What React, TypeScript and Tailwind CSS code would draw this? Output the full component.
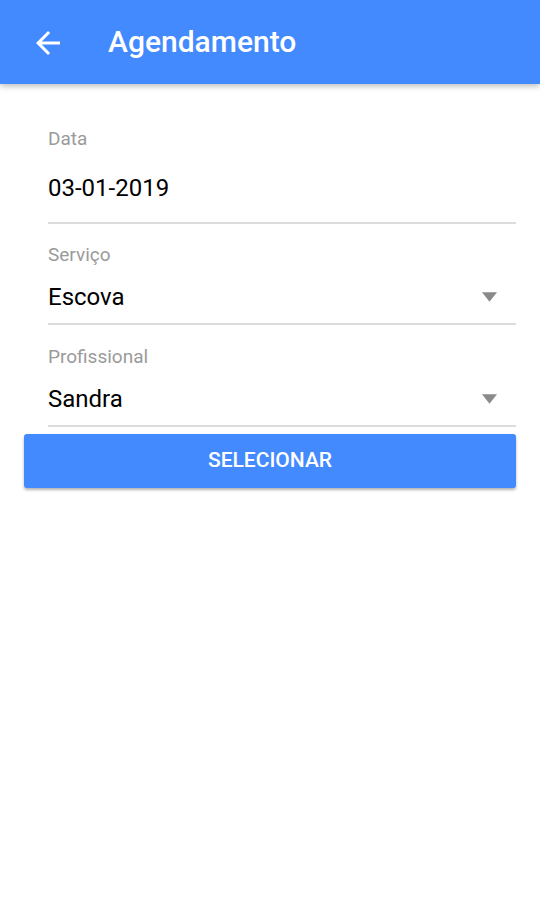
const font = { fontFamily: 'Roboto, "Noto Sans", sans-serif' };

function ArrowBack() {
  return (
    <svg viewBox="0 0 24 24" className="w-[36px] h-[36px]" fill="white">
      <path d="M20 11H7.83l5.59-5.59L12 4l-8 8 8 8 1.41-1.41L7.83 13H20v-2z" />
    </svg>
  );
}

function Caret() {
  return (
    <svg viewBox="0 0 16 10" className="w-[15px] h-[10px]" fill="#8a8a8a">
      <path d="M0 0h16L8 10z" />
    </svg>
  );
}

interface FieldProps {
  label: string;
  value: string;
  select?: boolean;
  labelGap: string;
  valueGap: string;
}

function Field({ label, value, select, labelGap, valueGap }: FieldProps) {
  return (
    <div className="flex flex-col">
      <div className="text-[19px] leading-[22px] text-[#9a9a9a]">{label}</div>
      <div className={`flex items-center justify-between ${labelGap}`}>
        <span className="text-[24px] leading-[28px] text-black">{value}</span>
        {select && (
          <span className="mr-[19px]">
            <Caret />
          </span>
        )}
      </div>
      <div className={`h-[2px] bg-[#dcdcdc] ${valueGap}`} />
    </div>
  );
}

export default function App() {
  return (
    <div className="w-[540px] h-[922px] bg-white" style={font}>
      <header className="relative z-10 h-[84px] bg-[#448aff] flex items-center shadow-[0_2px_6px_rgba(0,0,0,0.28)]">
        <div className="ml-[30px] mt-[2px]">
          <ArrowBack />
        </div>
        <h1 className="ml-[42px] text-white text-[30px] font-medium leading-none">Agendamento</h1>
      </header>

      <div className="pl-[48px] pr-[24px] pt-[44px] flex flex-col">
        <Field label="Data" value="03-01-2019" labelGap="mt-[24px]" valueGap="mt-[20px]" />
        <div className="mt-[20px]">
          <Field label="Serviço" value="Escova" select labelGap="mt-[17px]" valueGap="mt-[12px]" />
        </div>
        <div className="mt-[21px]">
          <Field label="Profissional" value="Sandra" select labelGap="mt-[17px]" valueGap="mt-[12px]" />
        </div>
      </div>

      <div className="px-[24px] mt-[7px]">
        <button
          type="button"
          className="w-full h-[54px] rounded-[3px] bg-[#448aff] text-white text-[21px] font-medium shadow-[0_2px_3px_rgba(0,0,0,0.3)]"
        >
          SELECIONAR
        </button>
      </div>
    </div>
  );
}
